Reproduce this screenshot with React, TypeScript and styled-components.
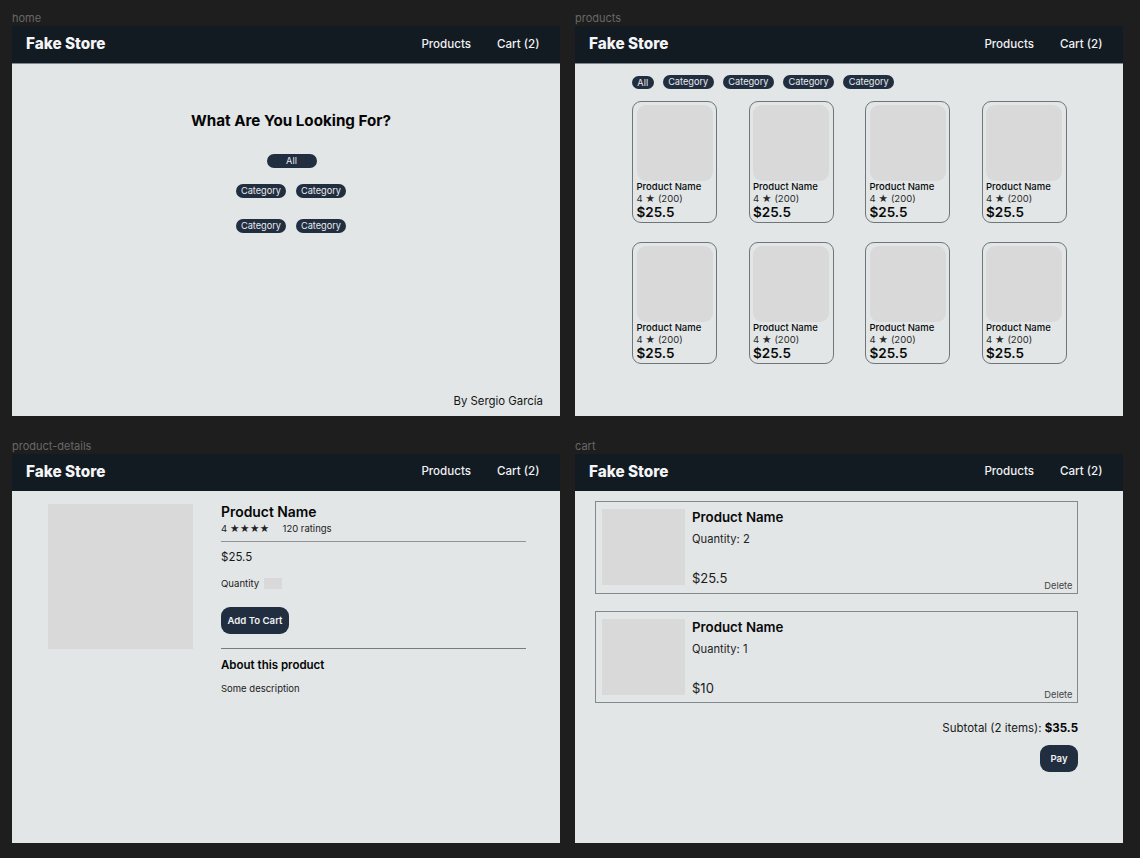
import React from "react";
import styled, { createGlobalStyle } from "styled-components";

const Global = createGlobalStyle`
  html, body { margin: 0; padding: 0; background: #1e1e1e; }
  body { font-family: Inter, "Liberation Sans", sans-serif; height: 858px; overflow: hidden; }
  * { box-sizing: border-box; }
  p, h1, h2, h3 { margin: 0; }
`;

const Canvas = styled.div`
  display: grid;
  grid-template-columns: 548px 548px;
  grid-template-rows: 404px 403px;
  column-gap: 15px;
  row-gap: 24px;
  padding: 12px 0 0 12px;
`;
const FrameBox = styled.section`
  display: flex;
  flex-direction: column;
  min-height: 0;
`;
const FrameLabel = styled.div`
  height: 14px;
  font-size: 11px;
  line-height: 13px;
  color: #686868;
`;
const Screen = styled.div`
  flex: 1;
  background: #e2e6e7;
  display: flex;
  flex-direction: column;
  min-height: 0;
`;
const Header = styled.header<{ $compact?: boolean }>`
  height: ${(p) => (p.$compact ? 37 : 38)}px;
  flex: none;
  background: #121a22;
  border-bottom: ${(p) => (p.$compact ? "0" : "1px solid #7d8791")};
  display: flex;
  align-items: center;
  justify-content: space-between;
  padding: 0 20.5px ${(p) => (p.$compact ? 3 : 2)}px 14px;
`;
const Logo = styled.div`
  font-size: 15.3px;
  font-weight: 800;
  color: #f4f5f6;
`;
const Nav = styled.nav`
  display: flex;
  gap: 26px;
`;
const NavLink = styled.a`
  font-size: 11.6px;
  font-weight: 500;
  color: #f0f1f2;
`;
const Pill = styled.span<{ $w?: number }>`
  display: inline-flex;
  align-items: center;
  justify-content: center;
  width: ${(p) => p.$w ?? 51}px;
  height: 14px;
  border-radius: 7px;
  background: #212e40;
  color: #e8eaec;
  font-size: 9.2px;
  line-height: 1;
`;
const SmallPill = styled(Pill)`
  height: 13px;
  margin-top: 1.5px;
`;

/* home */
const HomeBody = styled.main`
  flex: 1;
  display: flex;
  flex-direction: column;
  align-items: center;
  padding-top: 47px;
  padding-left: 10px;
  position: relative;
`;
const HomeTitle = styled.h1`
  font-size: 15.2px;
  line-height: 19px;
  font-weight: 700;
  color: #050505;
`;
const AllRow = styled.div`
  margin: 24px 0 0 1px;
  display: flex;
`;
const CatGrid = styled.div`
  margin-top: 16px;
  display: grid;
  grid-template-columns: 50px 50px;
  column-gap: 10px;
  row-gap: 21px;
`;
const Footer = styled.footer`
  margin-top: auto;
  align-self: flex-end;
  padding: 0 17px 7px 0;
  font-size: 11.4px;
  line-height: 15px;
  color: #151515;
`;

/* products */
const ProductsBody = styled.main`
  flex: 1;
  padding: 10.5px 0 0 57px;
  display: flex;
  flex-direction: column;
`;
const PillRow = styled.div`
  display: flex;
  gap: 9.2px;
  height: 15px;
  align-items: flex-start;
`;
const ProductGrid = styled.div`
  margin-top: 11.5px;
  display: grid;
  grid-template-columns: repeat(4, 85px);
  grid-auto-rows: 122px;
  column-gap: 31.5px;
  row-gap: 19px;
`;
const Card = styled.article`
  border: 1px solid #6f767a;
  border-radius: 9px;
  padding: 3px 3.5px;
  display: flex;
  flex-direction: column;
`;
const CardImage = styled.div`
  width: 76px;
  height: 76px;
  flex: none;
  background: #d9d9d9;
  border-radius: 9px;
`;
const CardName = styled.div`
  font-size: 9.5px;
  line-height: 12px;
  font-weight: 500;
  color: #0a0a0a;
`;
const CardRating = styled.div`
  font-size: 9.5px;
  line-height: 11px;
  color: #2a2a2a;
`;
const CardPrice = styled.div`
  font-size: 13.5px;
  line-height: 16px;
  font-weight: 600;
  color: #0a0a0a;
`;

/* details */
const DetailsBody = styled.main`
  flex: 1;
  display: flex;
  padding: 13px 34px 0 36px;
  gap: 28px;
`;
const DetailsImage = styled.div`
  width: 145px;
  height: 145px;
  flex: none;
  background: #d9d9d9;
`;
const DetailsInfo = styled.div`
  flex: 1;
  display: flex;
  flex-direction: column;
  align-items: flex-start;
`;
const DetailsName = styled.h2`
  margin-top: 1px;
  font-size: 13.9px;
  line-height: 15px;
  font-weight: 600;
  color: #050505;
`;
const RatingLine = styled.div`
  display: flex;
  gap: 13px;
  font-size: 9.5px;
  line-height: 12px;
  color: #222;
  margin-top: 3px;
`;
const Rule = styled.hr<{ $tone?: string; $gap?: number }>`
  width: 100%;
  height: 1px;
  border: 0;
  margin: ${(p) => p.$gap ?? 0}px 0 0;
  background: ${(p) => p.$tone ?? "#8f9496"};
`;
const Price = styled.div`
  margin-top: 8px;
  font-size: 11.5px;
  line-height: 14px;
  color: #1a1a1a;
`;
const QuantityRow = styled.div`
  margin-top: 14px;
  display: flex;
  align-items: center;
  gap: 5px;
  font-size: 9.6px;
  line-height: 11px;
  color: #1a1a1a;
`;
const QuantityBox = styled.div`
  width: 18px;
  height: 11px;
  background: #d9d9d9;
`;
const Button = styled.button<{ $w: number }>`
  width: ${(p) => p.$w}px;
  height: 27px;
  border: 0;
  padding: 0;
  border-radius: 9px;
  background: #212e40;
  color: #f0f1f2;
  font-family: inherit;
  font-size: 9.6px;
  font-weight: 600;
`;
const CartButton = styled(Button)`
  margin: 18px 0 14px;
`;
const AboutTitle = styled.h3`
  margin-top: 9px;
  font-size: 11.5px;
  line-height: 14px;
  font-weight: 600;
  color: #050505;
`;
const Description = styled.p`
  margin-top: 11px;
  font-size: 9.5px;
  line-height: 11px;
  color: #1a1a1a;
`;

/* cart */
const CartBody = styled.main`
  flex: 1;
  padding: 10px 45px 0 20px;
  display: flex;
  flex-direction: column;
  gap: 17px;
`;
const CartItem = styled.article<{ $h: number }>`
  height: ${(p) => p.$h}px;
  border: 1px solid #83898c;
  padding: 7px 0 0 6px;
  display: flex;
  gap: 7px;
  position: relative;
`;
const CartImage = styled.div`
  width: 83px;
  height: 76px;
  flex: none;
  background: #d9d9d9;
`;
const CartInfo = styled.div`
  height: 77px;
  display: flex;
  flex-direction: column;
`;
const CartName = styled.h2`
  font-size: 13.3px;
  line-height: 16px;
  font-weight: 600;
  color: #0a0a0a;
`;
const CartQty = styled.div`
  margin-top: 8px;
  font-size: 11.2px;
  line-height: 13px;
  color: #222;
`;
const CartPrice = styled.div`
  margin-top: auto;
  font-size: 13px;
  line-height: 16px;
  color: #1a1a1a;
`;
const Delete = styled.a`
  position: absolute;
  right: 4.5px;
  bottom: 2px;
  font-size: 9.3px;
  line-height: 11px;
  color: #444;
`;
const Summary = styled.div`
  margin-top: 1px;
  display: flex;
  flex-direction: column;
  align-items: flex-end;
  gap: 10px;
`;
const Subtotal = styled.div`
  font-size: 11.5px;
  line-height: 14px;
  color: #1a1a1a;
  strong { font-weight: 700; color: #050505; }
`;

const TopBar = ({ compact }: { compact?: boolean }) => (
  <Header $compact={compact}>
    <Logo>Fake Store</Logo>
    <Nav>
      <NavLink>Products</NavLink>
      <NavLink>Cart (2)</NavLink>
    </Nav>
  </Header>
);

const Frame = ({ label, compact, children }: { label: string; compact?: boolean; children: React.ReactNode }) => (
  <FrameBox>
    <FrameLabel>{label}</FrameLabel>
    <Screen>
      <TopBar compact={compact} />
      {children}
    </Screen>
  </FrameBox>
);

const ids = [0, 1, 2, 3, 4, 5, 6, 7];
const items = [
  { qty: 2, price: "$25.5", h: 93 },
  { qty: 1, price: "$10", h: 92 },
];

export default function App() {
  return (
    <>
      <Global />
      <Canvas>
        <Frame label="home">
          <HomeBody>
            <HomeTitle>What Are You Looking For?</HomeTitle>
            <AllRow>
              <Pill $w={50}>All</Pill>
            </AllRow>
            <CatGrid>
              <Pill $w={50}>Category</Pill>
              <Pill $w={50}>Category</Pill>
              <Pill $w={50}>Category</Pill>
              <Pill $w={50}>Category</Pill>
            </CatGrid>
            <Footer>By Sergio García</Footer>
          </HomeBody>
        </Frame>

        <Frame label="products">
          <ProductsBody>
            <PillRow>
              <SmallPill $w={21.5}>All</SmallPill>
              <Pill>Category</Pill>
              <Pill>Category</Pill>
              <Pill>Category</Pill>
              <Pill>Category</Pill>
            </PillRow>
            <ProductGrid>
              {ids.map((id) => (
                <Card key={id}>
                  <CardImage />
                  <CardName>Product Name</CardName>
                  <CardRating>4 ★ (200)</CardRating>
                  <CardPrice>$25.5</CardPrice>
                </Card>
              ))}
            </ProductGrid>
          </ProductsBody>
        </Frame>

        <Frame label="product-details" compact>
          <DetailsBody>
            <DetailsImage />
            <DetailsInfo>
              <DetailsName>Product Name</DetailsName>
              <RatingLine>
                <span>4 ★★★★</span>
                <span>120 ratings</span>
              </RatingLine>
              <Rule $gap={6} />
              <Price>$25.5</Price>
              <QuantityRow>
                Quantity
                <QuantityBox />
              </QuantityRow>
              <CartButton $w={68}>Add To Cart</CartButton>
              <Rule $tone="#777c7e" />
              <AboutTitle>About this product</AboutTitle>
              <Description>Some description</Description>
            </DetailsInfo>
          </DetailsBody>
        </Frame>

        <Frame label="cart" compact>
          <CartBody>
            {items.map((it) => (
              <CartItem key={it.qty} $h={it.h}>
                <CartImage />
                <CartInfo>
                  <CartName>Product Name</CartName>
                  <CartQty>Quantity: {it.qty}</CartQty>
                  <CartPrice>{it.price}</CartPrice>
                </CartInfo>
                <Delete>Delete</Delete>
              </CartItem>
            ))}
            <Summary>
              <Subtotal>
                Subtotal (2 items): <strong>$35.5</strong>
              </Subtotal>
              <Button $w={38}>Pay</Button>
            </Summary>
          </CartBody>
        </Frame>
      </Canvas>
    </>
  );
}
